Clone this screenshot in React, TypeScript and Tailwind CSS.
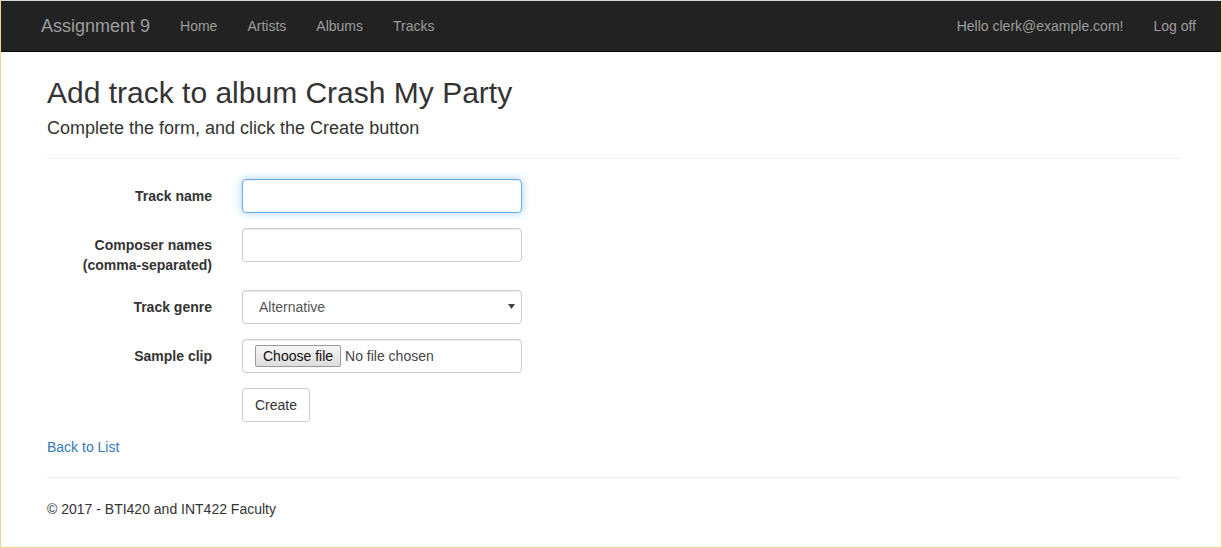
import React from 'react';

const navLinks = ['Home', 'Artists', 'Albums', 'Tracks'];

const inputBase =
  'block w-[280px] h-[34px] rounded-[4px] border border-[#ccc] bg-white px-[12px] text-[14px] text-[#555] shadow-[inset_0_1px_1px_rgba(0,0,0,0.075)] outline-none';

function FormRow({ label, children }: { label: React.ReactNode; children: React.ReactNode }) {
  return (
    <div className="flex mb-[15px]">
      <label className="w-[165px] shrink-0 pt-[7px] text-right font-bold text-[#333]">{label}</label>
      <div className="ml-[30px]">{children}</div>
    </div>
  );
}

export default function App() {
  return (
    <div
      className="w-[1222px] h-[548px] overflow-hidden border-x border-b border-[#f0d58c] border-t border-t-[#d6d6d6] bg-white text-[14px] leading-[20px] text-[#333]"
      style={{ fontFamily: '"Liberation Sans", Arial, sans-serif' }}
    >
      {/* navbar */}
      <div className="h-[51px] bg-[#222] border-b border-[#080808] flex items-center pl-[40px] pr-[25px] text-[#9d9d9d]">
        <span className="text-[18px] leading-[20px] pr-[15px]">Assignment 9</span>
        <div className="flex">
          {navLinks.map((l) => (
            <span key={l} className="px-[15px]">
              {l}
            </span>
          ))}
        </div>
        <div className="ml-auto flex gap-[30px]">
          <span>Hello clerk@example.com!</span>
          <span>Log off</span>
        </div>
      </div>

      {/* body */}
      <div className="pl-[46px] pr-[41px]">
        <h2 className="mt-[24px] text-[30px] leading-[33px] font-normal">Add track to album Crash My Party</h2>
        <h4 className="mt-[9px] text-[18px] leading-[20px] font-normal">Complete the form, and click the Create button</h4>
        <hr className="mt-[20px] mb-[20px] border-0 border-t border-[#eee]" />

        <form>
          <FormRow label="Track name">
            <input
              type="text"
              className="block w-[280px] h-[34px] rounded-[4px] border border-[#66afe9] bg-white px-[12px] text-[14px] text-[#555] outline-none shadow-[inset_0_1px_1px_rgba(0,0,0,0.075),0_0_8px_rgba(102,175,233,0.6)]"
            />
          </FormRow>
          <FormRow
            label={
              <>
                Composer names
                <br />
                (comma-separated)
              </>
            }
          >
            <input type="text" className={inputBase} />
          </FormRow>
          <FormRow label="Track genre">
            <div className="relative">
              <select className={inputBase + ' appearance-none pl-[16px]'} defaultValue="Alternative">
                <option>Alternative</option>
              </select>
              <svg className="absolute left-[266px] top-[14px]" width="7" height="5" viewBox="0 0 7 5">
                <path d="M0 0H7L3.5 5Z" fill="#444" />
              </svg>
            </div>
          </FormRow>
          <FormRow label="Sample clip">
            <div className="flex items-center w-[280px] h-[34px] rounded-[4px] border border-[#ccc] bg-white pl-[12px] shadow-[inset_0_1px_1px_rgba(0,0,0,0.075)] text-[14px]">
              <span className="h-[22px] px-[7px] leading-[20px] rounded-[2px] border border-[#9a9a9a] bg-gradient-to-b from-[#f6f6f6] to-[#dedede] text-[#111]">
                Choose file
              </span>
              <span className="ml-[4px] text-[#444]">No file chosen</span>
            </div>
          </FormRow>
          <div className="flex mb-[15px]">
            <div className="w-[165px] shrink-0" />
            <button
              type="button"
              className="ml-[30px] h-[34px] px-[12px] rounded-[4px] border border-[#ccc] bg-white text-[14px] text-[#333]"
            >
              Create
            </button>
          </div>
        </form>

        <a className="block text-[#337ab7]">Back to List</a>
        <hr className="mt-[20px] mb-[21px] border-0 border-t border-[#eee]" />
        <p>© 2017 - BTI420 and INT422 Faculty</p>
      </div>
    </div>
  );
}
